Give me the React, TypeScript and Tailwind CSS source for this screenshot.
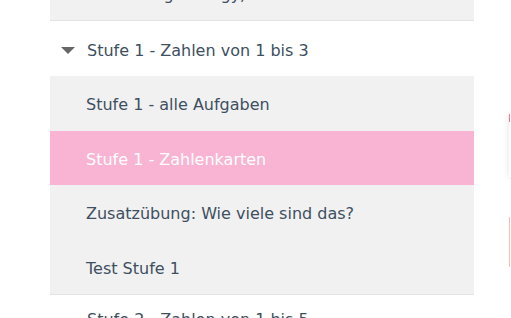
import React from 'react';

const font = { fontFamily: '"DejaVu Sans", Verdana, sans-serif' };

interface SubItemProps {
  label: string;
  active?: boolean;
}

function SubItem({ label, active }: SubItemProps) {
  return (
    <div
      className={`h-[54.5px] shrink-0 flex items-center pl-[36px] pt-[4px] text-[16px] whitespace-nowrap ${
        active ? 'bg-[#f8b4d2] text-white' : 'bg-[#f1f1f1] text-[#3d4f60]'
      }`}
    >
      {label}
    </div>
  );
}

interface HeadingProps {
  label: string;
  open?: boolean;
  className?: string;
}

function Heading({ label, open = true, className = 'pt-[4px]' }: HeadingProps) {
  return (
    <div
      className={`h-[55px] shrink-0 flex items-center pl-[11px] text-[16px] text-[#3d4f60] whitespace-nowrap ${className}`}
    >
      <svg
        width="14"
        height="8"
        viewBox="0 0 14 8"
        className={`mr-[12px] ${open ? '' : 'invisible'}`}
      >
        <path d="M0 0 L14 0 L7 7 Z" fill="#666" />
      </svg>
      {label}
    </div>
  );
}

export default function App() {
  return (
    <div className="w-[511px] h-[318px] overflow-hidden bg-white flex" style={font}>
      <div className="w-[50px] shrink-0" />
      <div className="w-[424px] shrink-0 flex flex-col">
        <div className="shrink-0 -mt-[34.5px] border-b border-[#e3e3e3]">
          <SubItem label="Einführung: Energy," />
        </div>
        <Heading label="Stufe 1 - Zahlen von 1 bis 3" />
        <SubItem label="Stufe 1 - alle Aufgaben" />
        <SubItem label="Stufe 1 - Zahlenkarten" active />
        <SubItem label="Zusatzübung: Wie viele sind das?" />
        <SubItem label="Test Stufe 1" />
        <div className="shrink-0 border-t border-[#e3e3e3]">
          <Heading label="Stufe 2 - Zahlen von 1 bis 5" open={false} className="pb-[5px]" />
        </div>
      </div>
      <div className="w-[35px] shrink-0" />
      <div className="flex flex-col shrink-0 w-[40px]">
        <div className="mt-[114px] h-[63px] bg-white shadow-[0_0_6px_rgba(0,0,0,0.12)] flex">
          <div className="w-[1px] h-[8px] bg-[#f07a8a]" />
        </div>
        <div className="mt-[40px] w-[1px] h-[50px] bg-[#f5c0a8]" />
      </div>
    </div>
  );
}
